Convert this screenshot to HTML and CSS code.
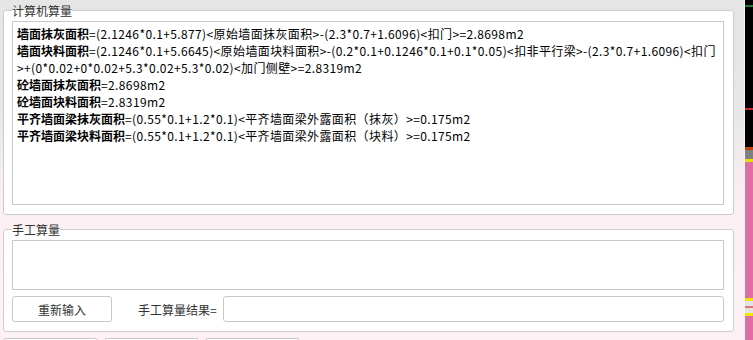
FILE: index.html
```html
<!DOCTYPE html>
<html lang="zh-CN">
<head>
    <meta charset="UTF-8">
    <meta name="viewport" content="width=device-width, initial-scale=1.0">
    <title>算量结果</title>
    <link rel="stylesheet" href="styles.css">
</head>
<body>

<div class="window">
    <div class="panel">
        <fieldset class="group">
            <legend>计算机算量</legend>
            <div class="result-box">
                <div><b>墙面抹灰面积</b>=(2.1246*0.1+5.877)&lt;原始墙面抹灰面积&gt;-(2.3*0.7+1.6096)&lt;扣门&gt;=2.8698m2</div>
                <div><b>墙面块料面积</b>=(2.1246*0.1+5.6645)&lt;原始墙面块料面积&gt;-(0.2*0.1+0.1246*0.1+0.1*0.05)&lt;扣非平行梁&gt;-(2.3*0.7+1.6096)&lt;扣门<br>&gt;+(0*0.02+0*0.02+5.3*0.02+5.3*0.02)&lt;加门侧壁&gt;=2.8319m2</div>
                <div><b>砼墙面抹灰面积</b>=2.8698m2</div>
                <div><b>砼墙面块料面积</b>=2.8319m2</div>
                <div><b>平齐墙面梁抹灰面积</b>=(0.55*0.1+1.2*0.1)&lt;平齐墙面梁外露面积（抹灰）&gt;=0.175m2</div>
                <div><b>平齐墙面梁块料面积</b>=(0.55*0.1+1.2*0.1)&lt;平齐墙面梁外露面积（块料）&gt;=0.175m2</div>
            </div>
        </fieldset>

        <fieldset class="group group-manual">
            <legend>手工算量</legend>
            <textarea class="manual-input"></textarea>
            <div class="manual-row">
                <button class="btn reset-btn">重新输入</button>
                <span class="result-label">手工算量结果=</span>
                <input type="text" class="result-input">
            </div>
        </fieldset>

        <div class="bottom-buttons">
            <button class="btn tab-btn"></button>
            <button class="btn tab-btn"></button>
            <button class="btn tab-btn"></button>
        </div>
    </div>
    <!-- neighbouring window edge -->
    <div class="side-strip"></div>
</div>

</body>
</html>
```

FILE: styles.css
```css
html, body {
    margin: 0;
    height: 340px;
    overflow: hidden;
}
body {
    font-family: "Noto Sans CJK SC", "Liberation Sans", sans-serif;
    font-size: 12px;
    color: #1a1a1a;
}
.window {
    display: flex;
    height: 340px;
}
.panel {
    width: 744px;
    height: 340px;
    overflow: hidden;
    padding: 2px 0 0 3px;
    box-sizing: border-box;
    background: linear-gradient(180deg, #e5e5e5 0, #e7e7e7 110px, #f9eef2 190px, #fdf0f5 230px, #fdf1f5 100%);
}
.group {
    width: 731px;
    box-sizing: border-box;
    margin: 0;
    padding: 2px 9px 9px 8px;
    border: 1px solid #cccccc;
    border-radius: 3px;
    background-color: #ffffff;
    min-width: 0;
}
.group legend {
    padding: 0;
    margin-left: 0;
    line-height: 17px;
    color: #333;
    font-size: 12px;
}
.result-box {
    height: 184px;
    box-sizing: border-box;
    border: 1px solid #c8c8c8;
    padding: 3px 4px;
    line-height: 17px;
    color: #000;
    letter-spacing: 0.38px;
    white-space: nowrap;
    overflow: hidden;
}
.result-box b {
    font-weight: bold;
    letter-spacing: 0;
}
.group-manual {
    margin-top: 6px;
}
.manual-input {
    display: block;
    width: 100%;
    height: 50px;
    box-sizing: border-box;
    border: 1px solid #c8c8c8;
    border-radius: 0;
    margin: 0;
    resize: none;
    font-family: inherit;
}
.manual-row {
    display: flex;
    align-items: center;
    margin-top: 6px;
    height: 26px;
}
.btn {
    font-family: inherit;
    font-size: 12px;
    color: #333;
    background: #ffffff;
    border: 1px solid #c8c8c8;
    border-radius: 3px;
    cursor: pointer;
}
.reset-btn {
    width: 100px;
    height: 26px;
    padding: 0;
}
.result-label {
    margin-left: 26px;
    margin-right: 6px;
    color: #333;
}
.result-input {
    flex: 1;
    height: 26px;
    box-sizing: border-box;
    border: 1px solid #c8c8c8;
    border-radius: 3px;
    margin: 0;
}
.bottom-buttons {
    display: flex;
    gap: 6px;
    margin-top: 6px;
}
.tab-btn {
    width: 95px;
    height: 26px;
}
.side-strip {
    width: 9px;
    border-left: 1px solid #f4f4f4;
    box-sizing: border-box;
    background: linear-gradient(180deg,
        #000 0, #000 5px, #1f7a2a 5px, #1f7a2a 7px,
        #000 7px, #000 108px, #c42a2a 108px, #c42a2a 110px,
        #000 110px, #000 147px, #c4400c 147px, #c4400c 150px,
        #808080 150px, #808080 159px, #eae000 159px, #eae000 162px,
        #de6fa6 162px, #de6fa6 298px, #f2e600 298px, #f2e600 301px,
        #e2e2e2 301px, #e2e2e2 306px, #e07474 306px, #e07474 308px,
        #e2e2e2 308px, #e2e2e2 313px, #f2e600 313px, #f2e600 316px,
        #de6fa6 316px, #de6fa6 100%);
}
```
